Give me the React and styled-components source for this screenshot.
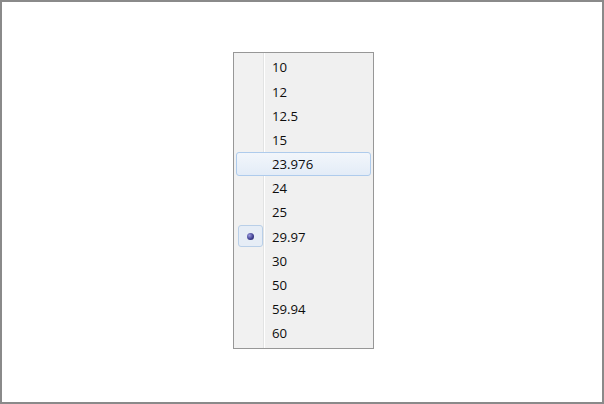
import React from 'react';
import styled, { createGlobalStyle } from 'styled-components';

const GlobalStyle = createGlobalStyle`
  html, body {
    margin: 0;
    padding: 0;
    background: #ffffff;
  }
`

const Frame = styled.div`
  width: 604px;
  height: 404px;
  box-sizing: border-box;
  border: 2px solid #8a8a8a;
  background: #ffffff;
  display: flex;
  align-items: center;
  justify-content: center;
  padding: 0 0 3px 3px;
`

const Menu = styled.ul`
  list-style: none;
  margin: 0;
  width: 141px;
  box-sizing: border-box;
  padding: 2px 2px 3px;
  border: 1px solid #979797;
  background: linear-gradient(to right, #f1f1f1 0, #f1f1f1 29px, #e2e3e3 29px, #e2e3e3 30px, #ffffff 30px, #ffffff 31px, #f0f0f0 31px);
  font-family: "Open Sans", "Noto Sans", sans-serif;
  font-size: 13.2px;
  color: #0d0d0d;
`

const Item = styled.li`
  height: 24.2px;
  box-sizing: border-box;
  display: flex;
  align-items: center;
  border: 1px solid ${p => (p.$hover ? '#aecbec' : 'transparent')};
  border-radius: 3px;
  background: ${p => (p.$hover ? 'linear-gradient(#f2f6fb, #e3ecf7)' : 'transparent')};
`

const Check = styled.span`
  width: 25px;
  height: 22px;
  margin-left: 1px;
  box-sizing: border-box;
  display: flex;
  align-items: center;
  justify-content: center;
  border: 1px solid ${p => (p.$on ? '#b9cfe8' : 'transparent')};
  border-radius: 3px;
  background: ${p => (p.$on ? '#e6edf6' : 'transparent')};
`

const Dot = styled.span`
  width: 7px;
  height: 7px;
  border-radius: 50%;
  background: radial-gradient(circle at 35% 35%, #9a9ae0 0, #3a3a8c 60%, #1e1e5c 100%);
`

const Label = styled.span`
  margin-left: 9px;
  padding-top: 2px;
  line-height: 1;
`

const rates = ['10', '12', '12.5', '15', '23.976', '24', '25', '29.97', '30', '50', '59.94', '60']

const App = () => {
  return (
    <>
      <GlobalStyle />
      <Frame>
        <Menu>
          {rates.map(r => (
            <Item key={r} $hover={r === '23.976'}>
              <Check $on={r === '29.97'}>{r === '29.97' && <Dot />}</Check>
              <Label>{r}</Label>
            </Item>
          ))}
        </Menu>
      </Frame>
    </>
  )
}

export default App;
